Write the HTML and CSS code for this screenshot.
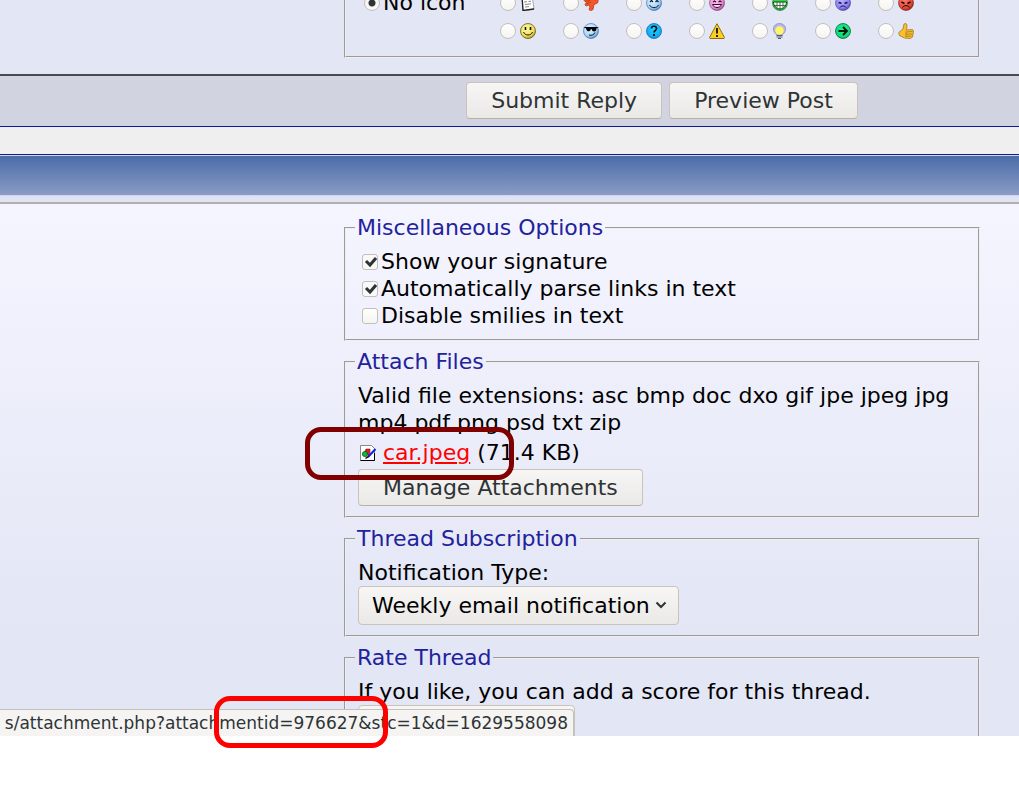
FILE: index.html
```html
<!DOCTYPE html>
<html lang="en">
<head>
<meta charset="utf-8">
<title>Reply to Thread</title>
<link rel="stylesheet" href="styles.css">
</head>
<body>
<svg width="0" height="0" class="defs" aria-hidden="true">
  <defs>
    <radialGradient id="yellow" cx=".4" cy=".35" r=".7"><stop offset="0" stop-color="#fffbb0"/><stop offset=".7" stop-color="#f0dc50"/><stop offset="1" stop-color="#a08820"/></radialGradient>
    <radialGradient id="blue" cx=".4" cy=".35" r=".7"><stop offset="0" stop-color="#f0faff"/><stop offset=".7" stop-color="#9cd0f8"/><stop offset="1" stop-color="#4a7ab0"/></radialGradient>
    <radialGradient id="sky" cx=".5" cy=".4" r=".7"><stop offset="0" stop-color="#20d8ff"/><stop offset=".7" stop-color="#12a8f4"/><stop offset="1" stop-color="#0a68b0"/></radialGradient>
    <radialGradient id="pink" cx=".4" cy=".35" r=".7"><stop offset="0" stop-color="#ffc8f0"/><stop offset=".7" stop-color="#e888d0"/><stop offset="1" stop-color="#904880"/></radialGradient>
    <radialGradient id="violet" cx=".4" cy=".35" r=".7"><stop offset="0" stop-color="#b8b0ff"/><stop offset=".7" stop-color="#8c80f4"/><stop offset="1" stop-color="#4c409c"/></radialGradient>
    <radialGradient id="red" cx=".4" cy=".35" r=".7"><stop offset="0" stop-color="#ff7868"/><stop offset=".7" stop-color="#e04838"/><stop offset="1" stop-color="#902018"/></radialGradient>
    <radialGradient id="green" cx=".5" cy=".4" r=".7"><stop offset="0" stop-color="#20f090"/><stop offset=".7" stop-color="#10d878"/><stop offset="1" stop-color="#087840"/></radialGradient>
  </defs>
</svg>
<main class="page">
  <form class="shot">
    <section class="icons-panel">
      <fieldset class="group icons-group">
        <label class="no-icon"><input class="radio" type="radio" name="icon" checked><span>No icon</span></label>
        <div class="icon-grid">
          <label class="choice"><input class="radio" type="radio" name="icon" aria-label="Post"><svg class="ico" viewBox="0 0 16 16"><path d="M2 1l10-1 2 14-11 2z" fill="#fff" stroke="#777" stroke-width=".6"/><path d="M2 1l1 14.500 11-1.500" fill="none" stroke="#222" stroke-width="1.300"/><path d="M4 4l6-.6M4 7l3-.3M8.500 6.500l2.500-.3M5 9.500l6-.7M5 12l4-.4" stroke="#888"/></svg></label>
          <label class="choice"><input class="radio" type="radio" name="icon" aria-label="Thumbs down"><svg class="ico" viewBox="0 0 16 16"><path d="M.5 5l3-4h9l3 3-1 4-3.500 1.500-1 5-2.500 1.300-1.500-1.300 1-2.500-1-2-3 1-1-1.500 1.500-2z" fill="#f4582c" stroke="#b83810" stroke-width=".8"/><path d="M2 6.500l5-1M3 9l5-2M10 4l3 1" stroke="#b83810" stroke-width=".8"/></svg></label>
          <label class="choice"><input class="radio" type="radio" name="icon" aria-label="Smile"><svg class="ico" viewBox="0 0 16 16"><circle cx="8" cy="8" r="7.500" fill="url(#blue)" stroke="#3a68a0" stroke-width=".6"/><path d="M4 7l1.500-1.500L7 7M9.500 7L11 5.500 12.500 7" fill="none" stroke="#123" stroke-width="1.300"/><path d="M3.500 10c1.500 3.500 7.500 3.500 9 0" fill="none" stroke="#123"/></svg></label>
          <label class="choice"><input class="radio" type="radio" name="icon" aria-label="Embarrassed"><svg class="ico" viewBox="0 0 16 16"><circle cx="8" cy="8" r="7.500" fill="url(#pink)" stroke="#804070" stroke-width=".6"/><path d="M4 7l1.500-1L7 7M9.500 7L11 6l1.500 1" fill="none" stroke="#301030" stroke-width="1.200"/><path d="M3.500 9.500c1.500 4 7.500 4 9 0z" fill="#ffd8f4" stroke="#301030"/></svg></label>
          <label class="choice"><input class="radio" type="radio" name="icon" aria-label="Grin"><svg class="ico" viewBox="0 0 16 16"><circle cx="8" cy="8" r="7.500" fill="#30d848" stroke="#106020" stroke-width=".6"/><path d="M1.500 7h13c0 4-3 7-6.500 7S1.500 11 1.500 7z" fill="#fff" stroke="#104018"/><path d="M2 10.500h12M5 7v6M8 7v7M11 7v6" stroke="#104018" stroke-width=".7"/></svg></label>
          <label class="choice"><input class="radio" type="radio" name="icon" aria-label="Sad"><svg class="ico" viewBox="0 0 16 16"><circle cx="8" cy="8" r="7.500" fill="url(#violet)" stroke="#483c90" stroke-width=".6"/><path d="M3.500 7.500l3 .8M12.500 7.500l-3 .8" stroke="#18103c" stroke-width="1.500"/><path d="M5 12.500c1-2 5-2 6 0" fill="none" stroke="#18103c"/></svg></label>
          <label class="choice"><input class="radio" type="radio" name="icon" aria-label="Angry"><svg class="ico" viewBox="0 0 16 16"><circle cx="8" cy="8" r="7.500" fill="url(#red)" stroke="#802018" stroke-width=".6"/><path d="M3.500 7l3 1.500M12.500 7l-3 1.500" stroke="#200" stroke-width="1.500"/><path d="M4.500 12.500c1-2.500 6-2.500 7 0" fill="none" stroke="#200"/></svg></label>
          <label class="choice"><input class="radio" type="radio" name="icon" aria-label="Happy"><svg class="ico" viewBox="0 0 16 16"><circle cx="8" cy="8" r="7.500" fill="url(#yellow)" stroke="#6c5c18" stroke-width=".8"/><path d="M5.500 4v3M10.500 4v3" stroke="#111" stroke-width="1.600"/><path d="M3.500 9c1.500 4 7.500 4 9 0" fill="none" stroke="#111"/></svg></label>
          <label class="choice"><input class="radio" type="radio" name="icon" aria-label="Cool"><svg class="ico" viewBox="0 0 16 16"><circle cx="8" cy="8" r="7.500" fill="url(#blue)" stroke="#4a78b0" stroke-width=".7"/><path d="M0 4h16l-2.500 1.200c0 4-4 4.500-5 .8H8C7 9.500 3.500 9 3 5.200z" fill="#000"/><path d="M6 12c3 1 5-.5 6-2.500" fill="none" stroke="#111"/></svg></label>
          <label class="choice"><input class="radio" type="radio" name="icon" aria-label="Question"><svg class="ico" viewBox="0 0 16 16"><circle cx="8" cy="8" r="7.500" fill="url(#sky)" stroke="#0a70b8" stroke-width=".8"/><path d="M5.500 5.500c0-3 5-3 5 0 0 2-2.500 2-2.500 4" fill="none" stroke="#111" stroke-width="1.700"/><path d="M7 11h2v2H7z" fill="#111"/></svg></label>
          <label class="choice"><input class="radio" type="radio" name="icon" aria-label="Exclamation"><svg class="ico" viewBox="0 0 16 16"><path d="M8 .7l7.500 13.800-.5 1H1l-.5-1z" fill="#fcd020" stroke="#806010" stroke-width=".9" stroke-linejoin="round"/><path d="M8 5v5.500M8 12v2" stroke="#111" stroke-width="1.800"/></svg></label>
          <label class="choice"><input class="radio" type="radio" name="icon" aria-label="Lightbulb"><svg class="ico" viewBox="0 0 16 16"><path d="M5 12C-1 8 1 .5 7.500 .5S16 8 10 12z" fill="#b8b8e8" stroke="#8c8cc0" stroke-width=".8"/><circle cx="7.500" cy="7.500" r="4.200" fill="#fff760"/><path d="M4.500 12.500h6M4.500 14h6M6 15.500h3" stroke="#555870" stroke-width="1.200"/></svg></label>
          <label class="choice"><input class="radio" type="radio" name="icon" aria-label="Arrow"><svg class="ico" viewBox="0 0 16 16"><circle cx="8" cy="8" r="7.500" fill="url(#green)" stroke="#087040" stroke-width=".8"/><path d="M3.500 8h8M8 4l4 4-4 4" fill="none" stroke="#02180c" stroke-width="1.900"/></svg></label>
          <label class="choice"><input class="radio" type="radio" name="icon" aria-label="Thumbs up"><svg class="ico" viewBox="0 0 16 16"><path d="M.7 9.500L5 6 6 1l2-.5 1 1.500-.5 5 6-.5L15.500 8l-1 6-2 1.500-6-.5-5-2.500z" fill="#f8c030" stroke="#a87818" stroke-width=".8"/><path d="M8 9l6.500-.5M8 11.200l6.500-.2M8 13.200h5.500M8 8.500V14" stroke="#a87818" stroke-width=".8"/></svg></label>
        </div>
      </fieldset>
    </section>
    <div class="actions">
      <button class="btn" type="button">Submit Reply</button>
      <button class="btn" type="button">Preview Post</button>
    </div>
    <div class="spacer"></div>
    <div class="heading"></div>
    <section class="options">
      <fieldset class="group">
        <legend>Miscellaneous Options</legend>
        <label class="check"><input class="box" type="checkbox" checked>Show your signature</label>
        <label class="check"><input class="box" type="checkbox" checked>Automatically parse links in text</label>
        <label class="check"><input class="box" type="checkbox">Disable smilies in text</label>
      </fieldset>
      <fieldset class="group">
        <legend>Attach Files</legend>
        <p class="text">Valid file extensions: asc bmp doc dxo gif jpe jpeg jpg mp4 pdf png psd txt zip</p>
        <div class="file">
          <svg class="ico" viewBox="0 0 16 16" aria-hidden="true"><path d="M.5.500h11l3 3v12H.5z" fill="#fff" stroke="#888"/><path d="M.5 15.500h14V8" fill="none" stroke="#000"/><path d="M6 4h4v3l-1 4-4-5z" fill="#e02020" stroke="#600" stroke-width=".5"/><circle cx="5" cy="9" r="2.600" fill="#10c020" stroke="#043" stroke-width=".7"/><path d="M8 12l7.500-8" stroke="#1020e0" stroke-width="2"/><path d="M5.500 13.500l3-2" stroke="#000" stroke-width="1.500"/></svg>
          <span><a class="link" href="#attachment">car.jpeg</a> (71.4 KB)</span>
        </div>
        <button class="btn" type="button">Manage Attachments</button>
      </fieldset>
      <fieldset class="group">
        <legend>Thread Subscription</legend>
        <label class="text" for="notify">Notification Type:</label>
        <div class="pick">
          <select class="select" id="notify"><option>Weekly email notification</option></select>
          <svg class="chevron" viewBox="0 0 12 8" aria-hidden="true"><path d="M1.500 1.500L6 6l4.500-4.500" fill="none" stroke="#2e3436" stroke-width="2"/></svg>
        </div>
      </fieldset>
      <fieldset class="group">
        <legend>Rate Thread</legend>
        <label class="text" for="rate">If you like, you can add a score for this thread.</label>
        <div class="pick"><select class="select rate" id="rate"></select></div>
      </fieldset>
    </section>
    <div class="status"><span>s/attachment.php?attachmentid=976627&amp;stc=1&amp;d=1629558098</span></div>
  </form>
  <div class="mark mark-file"></div>
  <div class="mark mark-id"></div>
</main>
</body>
</html>
```
FILE: styles.css
```css
* { box-sizing: border-box; }
body {
  margin: 0;
  background: #fff;
  color: #000;
  font: 22px/27px "DejaVu Sans", Verdana, sans-serif;
}
.defs { position: absolute; }
.page { position: relative; min-height: 100vh; overflow: hidden; }
.shot {
  position: relative;
  display: flex;
  flex-direction: column;
  height: calc(100vh - 64px);
  overflow: hidden;
}
.icons-panel {
  flex: none;
  display: flex;
  flex-direction: column;
  justify-content: flex-end;
  height: 74px;
  padding: 0 39px 16px 344px;
  overflow: hidden;
  background: #e3e6f5;
}
.group {
  min-width: 0;
  margin: 0;
  padding: 6px 12px 10px;
  border: 2px groove #f0efee;
}
.group legend { padding: 0 2px; margin-left: -3px; line-height: 28px; color: #22229c; }
.icons-group { display: flex; padding: 0 16px 11px 18px; }
.no-icon { display: flex; align-items: center; gap: 3px; width: 136px; height: 28px; line-height: 24px; }
.icon-grid {
  display: grid;
  grid-template-columns: repeat(7, 63px);
  grid-auto-rows: 28px;
}
.choice { display: flex; align-items: center; gap: 4px; }
.ico { display: block; flex: none; width: 16px; height: 16px; }
.radio, .box {
  appearance: none;
  flex: none;
  width: 16px;
  height: 16px;
  margin: 0;
  border: 1px solid #c3bfba;
  background: linear-gradient(#fff, #f5f4f2);
}
.radio { border-radius: 50%; }
.radio:checked { background: radial-gradient(circle, #2e3436 3px, #f8f7f6 4px); }
.box { border-radius: 3px; }
.box:checked {
  background: url("data:image/svg+xml,%3Csvg xmlns='http://www.w3.org/2000/svg' viewBox='0 0 14 14'%3E%3Cpath d='M3 6l4 4 6-7' fill='none' stroke='%232e3436' stroke-width='3'/%3E%3C/svg%3E") #faf9f8;
}
.actions {
  flex: none;
  display: flex;
  justify-content: center;
  gap: 7px;
  padding: 6px 0 7px 305px;
  border-top: 2px solid #4a4a4c;
  background: #d1d3e0;
}
.btn {
  display: block;
  height: 37px;
  padding: 0 24px;
  border: 1px solid #c9c3bb;
  border-bottom-color: #b8b0a6;
  border-radius: 4px;
  background: linear-gradient(#f7f6f5, #eae9e6);
  color: #2e3436;
  font: inherit;
  white-space: nowrap;
}
.spacer { flex: none; height: 29px; border: solid #0b1c9a; border-width: 1px 0; background: #efefef; }
.heading {
  flex: none;
  height: 49px;
  border-top: 1px solid #d0d8ec;
  border-bottom: 2px solid #b0b0b0;
  background: linear-gradient(#4a6ca8, #8a9cc6 39px, #cdd3e8 39px, #e1e4f3 41px);
}
.options {
  flex: 1 0 auto;
  display: flex;
  flex-direction: column;
  gap: 7px;
  padding: 10px 39px 10px 344px;
  background: linear-gradient(#f5f5ff, #e3e6f5 420px);
}
.check { display: flex; align-items: center; gap: 3px; padding-left: 4px; }
.text { display: block; margin: 0; }
.file { display: flex; align-items: center; gap: 7px; height: 33px; padding-left: 2px; }
.link { color: #f00; }
.pick { position: relative; width: fit-content; }
.select {
  appearance: none;
  display: block;
  height: 39px;
  padding: 0 28px 0 13px;
  border: 1px solid #c9c3bb;
  border-radius: 4px;
  background: linear-gradient(#f7f6f5, #eae9e6);
  color: #000;
  font: inherit;
}
.rate { width: 217px; }
.chevron { position: absolute; right: 12px; top: 15px; width: 12px; height: 8px; }
.status {
  position: absolute;
  left: 0;
  bottom: 0;
  display: flex;
  justify-content: flex-end;
  width: 574px;
  height: 27px;
  padding-right: 5px;
  overflow: hidden;
  border: solid #c4c0ba;
  border-width: 1px 1px 0 0;
  border-radius: 0 4px 0 0;
  background: #f5f4f2;
  color: #2e3436;
  font: 17px/26px "DejaVu Sans", Verdana, sans-serif;
  white-space: nowrap;
}
.mark { position: absolute; border: 5px solid; border-radius: 16px; pointer-events: none; }
.mark-file { left: 305px; top: 427px; width: 209px; height: 53px; border-color: #800000; }
.mark-id { left: 214px; top: 696px; width: 174px; height: 52px; border-color: #f00; }
```
